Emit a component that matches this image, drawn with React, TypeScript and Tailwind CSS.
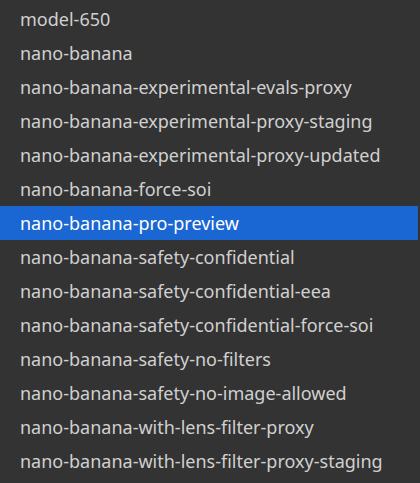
const models = [
  "model-650",
  "nano-banana",
  "nano-banana-experimental-evals-proxy",
  "nano-banana-experimental-proxy-staging",
  "nano-banana-experimental-proxy-updated",
  "nano-banana-force-soi",
  "nano-banana-pro-preview",
  "nano-banana-safety-confidential",
  "nano-banana-safety-confidential-eea",
  "nano-banana-safety-confidential-force-soi",
  "nano-banana-safety-no-filters",
  "nano-banana-safety-no-image-allowed",
  "nano-banana-with-lens-filter-proxy",
  "nano-banana-with-lens-filter-proxy-staging",
]

const selected = "nano-banana-pro-preview"

export default function App() {
  return (
    <div className="w-[420px] h-[483px] bg-[#333333] pt-[2px] pr-[2px] overflow-hidden font-['Noto_Sans',sans-serif]">
      <ul>
        {models.map((m) => (
          <li
            key={m}
            className={
              m === selected
                ? "h-[34px] flex items-center pl-[20px] text-[18px] bg-[#1a66d2] text-white"
                : "h-[34px] flex items-center pl-[20px] text-[18px] text-[#d0d0d0]"
            }
          >
            {m}
          </li>
        ))}
      </ul>
    </div>
  )
}
